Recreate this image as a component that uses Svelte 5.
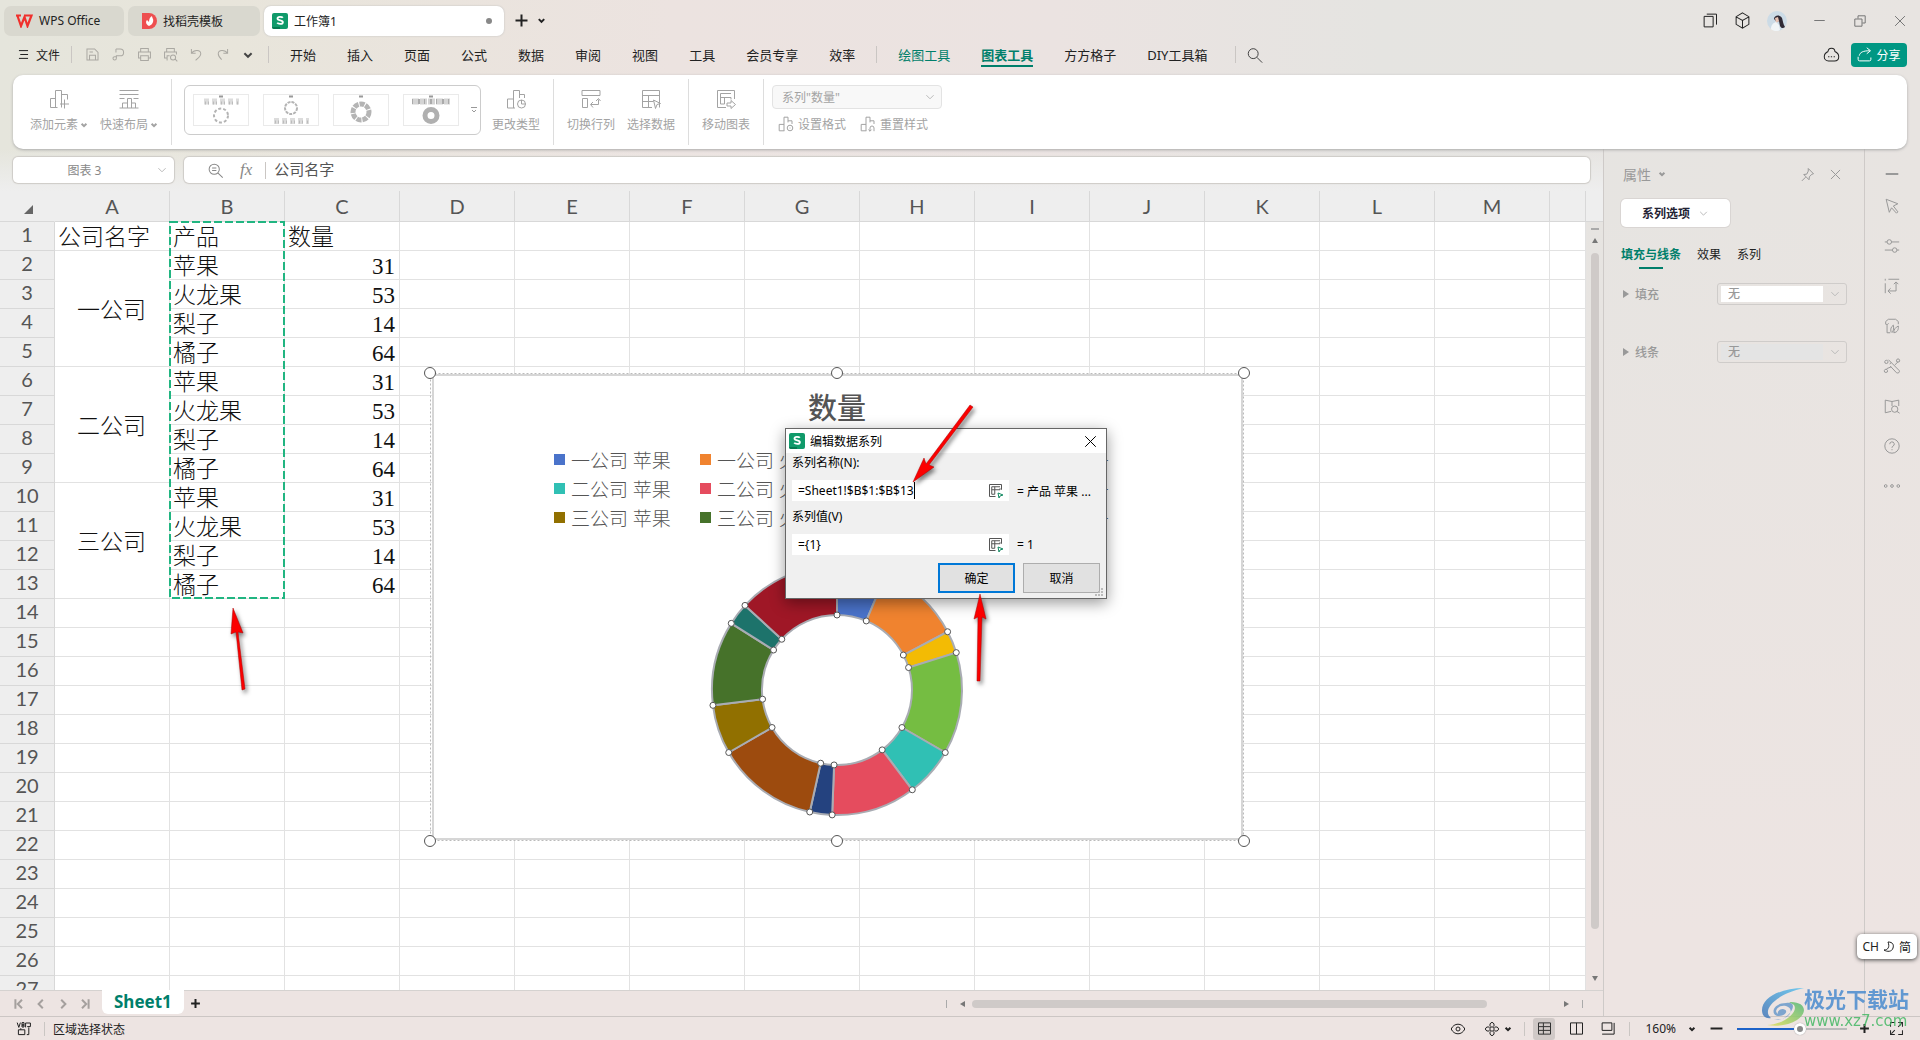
<script lang="ts">
  const icons: Record<string, string> = {
    menu: 'M3 4h14M5 10h12M3 16h14',
    save: 'M3.5 3.5h9l4 4v9h-13zM6.5 16v-5h7v5M6.5 7h4',
    export: 'M7 3.5h5a4 4 0 0 1 0 8H7.5v3a2 2 0 1 1-4 0 2 2 0 0 1 2-2h2M7 3.5v4',
    print: 'M5.5 7V3h9v4M5 14H3V7h14v7h-2M5.5 11.5h9V17h-9z',
    preview: 'M5.5 7V3h9v4M6 14H3V7h14v3M6 17v-5.500h3M16 13.500a3 3 0 1 1-6 0 3 3 0 0 1 6 0M15.500 15.500l2.500 2.500',
    undo: 'M4 3.500v5h5M4 8.500C7 4 15 4 15 9c0 3-3 5-6 8',
    redo: 'M16 3.500v5h-5M16 8.500C13 4 5 4 5 9c0 3 2 5 4 7',
    chevron: 'M4 7l6 6 6-6',
    search: 'M13.500 8.500a5.500 5.500 0 1 1-11 0 5.500 5.500 0 0 1 11 0M12 12.500l6 6',
    plus: 'M10 2v16M2 10h16',
    minus: 'M3 10h14',
    close: 'M3 3l14 14M17 3L3 17',
    restore: 'M3.500 7.500h9v9h-9zM7.500 7V3.500h9v9H13',
    pages: 'M1.500 4.500h12v14h-12zM5 1.500h13v14',
    cube: 'M10 1l7.500 4.500v9L10 19l-7.500-4.500v-9zM3 6l7 4 7-4M10 10v8.500',
    cloud: 'M6 6.500a4 4 0 0 1 8 0c2.500 1.200 4.500 3.500 4.500 6 0 3-2 5-5 5h-7c-3 0-5-2-5-5 0-2.500 2-4.800 4.500-6M6 12.500h1.500M9.200 12.500h1.500M12.500 12.500H14',
    share: 'M1.500 13v3.500a2 2 0 0 0 2 2h13a2 2 0 0 0 2-2V14M3 11.500C4 7 8 5 17 5M13 1l5 4-5 4',
    pin: 'M11 2l7 7-2 .5-3.500 3.500-.5 4-3.500-3.500-3.500-3.500 4-.5L11 5.500zM7.500 13.500L2.500 18.500',
    addElement: 'M8.500 18.500h-7v-9h5m0 9V1.500h6v17M12.500 5.500h6v5M15.500 10.500v9M11 15h9',
    quickLayout: 'M.5 1.500h19M.5 5.500h19M.5 9.500h5M14.500 9.500h5M3.500 19v-5h5M8.500 19V9.500h4V19M12.500 14h4v5M.5 19h19',
    changeType: 'M9 19H1.500v-9h6M7.500 19V1.500h6V9M13.500 5.500h5V9M19.500 15a4 4 0 1 1-8 0 4 4 0 0 1 8 0M15.500 11v4h4',
    switchRow: 'M1 1.500h18v5H1zM1.500 9.500h5v9h-5zM10 15.500h7.500v-5M12 13l-2.500 2.500 2.500 3M15 12l2.500-2.500 2 2.500',
    pickData: 'M1.500 1.500h17v17M1.500 1.500v17H11M1.500 6.500h17M7.500 6.500v12M1.500 12.500h11M18.500 6.500v6M12.500 11l7 3.500-3.500 1-1.500 4z',
    moveChart: 'M18.500 10V1.500h-17v17H10M4.500 15V4.500H15M4.500 8.500H15v2M8.500 8.500V15h-4M11 14h4v-2.500l4.500 4-4.500 4V17h-4z',
    formatSet: 'M8 18.500H1.500v-8h6M7.500 18.500V1.500h5V8M12.500 6h5v4M18.500 15a3.500 3.500 0 1 1-7 0 3.500 3.500 0 0 1 7 0M14.500 15h1',
    formatReset: 'M8 18.500H1.500v-8h6M7.500 18.500V1.500h5V8M12.500 6h5v4M17.500 19v-4a2.500 2.500 0 0 0-5 0v4M10.500 17l2 2 2-2',
    zoomOut: 'M14.500 8.500a6 6 0 1 1-12 0 6 6 0 0 1 12 0M6 7h5M6 10h5M13 13l5.500 5.500',
    cursor: 'M3.500 2.500l13 5-5 2.500 5 6.500-1.500 1.500-5.500-6-2.500 5z',
    sliders: 'M2 5.500h2.500M9.500 5.500H18M9.500 5.500a2.500 2.500 0 1 1-5 0 2.500 2.500 0 0 1 5 0M2 14.500h8.500M15.500 14.500H18M15.500 14.500a2.500 2.500 0 1 1-5 0 2.500 2.500 0 0 1 5 0',
    resize: 'M2.500 7v11M2.500 2v2M6 2.500h12M6 15.500h8.500V6M8.500 12.500L5.500 15.500l3 3M12 8l2.500-2.500L17 8',
    style: 'M3 8V5l3-2.500h8L17 5v3M3 8c2 1 3 0 3-1M4.500 9v8.500H8M9 17c-1-4 0-6 2.500-8 .5 3 .5 6-1.500 8.500M12 17.500c0-4 2-6 5-7.500.5 4-1 7-5 7.500',
    magic: 'M6 3l12 12c1 2-1 3.500-3 2.500L8 10M9 6L7.500 8M13 9l4-4M4 13l5-2M5 15a1.800 1.800 0 1 1-3.500 0 1.800 1.800 0 0 1 3.500 0M18.500 3.500a1.800 1.800 0 1 1-3.500 0 1.800 1.800 0 0 1 3.500 0M5.500 5a1.800 1.800 0 1 1-3.500 0 1.800 1.800 0 0 1 3.500 0',
    book: 'M9 16l-6.500 1.500v-14L10 5l7.500-1.500V10M10 5v5M16.500 13.500a3.500 3.500 0 1 1-7 0 3.500 3.500 0 0 1 7 0M15.500 16l3 2',
    help: 'M18 10a8 8 0 1 1-16 0 8 8 0 0 1 16 0M7.500 8a2.500 2.500 0 1 1 3.500 2.200c-.8.400-1 .8-1 1.800M10 13.500v1.200',
    more: 'M4.500 10a1.500 1.500 0 1 1-3 0 1.500 1.500 0 0 1 3 0M11.500 10a1.500 1.500 0 1 1-3 0 1.500 1.500 0 0 1 3 0M18.500 10a1.500 1.500 0 1 1-3 0 1.500 1.500 0 0 1 3 0',
    first: 'M4 2v16M15 3l-7 7 7 7',
    prev: 'M13 3l-7 7 7 7',
    next: 'M7 3l7 7-7 7',
    last: 'M16 2v16M5 3l7 7-7 7',
    macro: 'M1.500 2l2 6 2-6M7.500 2v5.500h2.500V5H7.500 10V2zM12 8V2.500h6V7h-4M16 8v9h-2.500M3 17v-6h8v6zM6 11v-2',
    eye: 'M1.500 10C5 2 15 2 18.500 10 15 18 5 18 1.500 10M12.500 10a2.500 2.500 0 1 1-5 0 2.500 2.500 0 0 1 5 0',
    target: 'M7.500 6.500v-3l2.500-2 2.500 2v3M13.500 7.500h3l2 2.500-2 2.500h-3M12.500 13.500v3l-2.500 2-2.500-2v-3M6.500 12.500h-3L1.500 10l2-2.500h3M7.500 7.500h5v5h-5z',
    gridView: 'M2 2.500h16v15H2zM2 7.500h16M2 12.500h16M8.500 2.500v15',
    pageView: 'M2 2.500h16v15H2zM10 2.500v15',
    layoutView: 'M1.500 2.500h13v10h-13zM17.500 2.500v15h-16',
    expand: 'M3 8V3h5M12 3h5v5M12 8l4-4M8 12l-4 4M3 12v5h5M17 12v5h-5',
    picker: 'M18 9V2H2v16h8M5 15V5h11M5 9h11V7M9 5v10H5',
  };

  const quick = ['save', 'export', 'print', 'preview', 'undo', 'redo'];
  const tabsMain = ['开始', '插入', '页面', '公式', '数据', '审阅', '视图', '工具', '会员专享', '效率'];
  const tabsTool = ['绘图工具', '图表工具', '方方格子', 'DIY工具箱'];
  const sideTools = ['minus', 'cursor', 'sliders', 'resize', 'style', 'magic', 'book', 'help', 'more'];

  const columns = 'ABCDEFGHIJKLM'.split('');
  const companies = ['一公司', '二公司', '三公司'];
  const products = ['苹果', '火龙果', '梨子', '橘子'];
  const amounts = [31, 53, 14, 64];
  const rows = Array.from({ length: 27 }, (_, i) => i + 1);
  const restColumns = columns.slice(3).concat('N');

  const colors = [
    '#4a73ca', '#f0832f', '#f3bb04', '#75bd42',
    '#30c0b4', '#e54c5e', '#24427f', '#9d4b0e',
    '#917000', '#46722a', '#1d736b', '#9f1726',
  ];

  const center = { x: 407, y: 317 };
  const outer = 125;
  const inner = 75;

  function point(radius: number, turn: number) {
    const angle = turn * Math.PI * 2;
    return {
      x: center.x + radius * Math.sin(angle),
      y: center.y - radius * Math.cos(angle),
    };
  }

  const values = companies.flatMap(() => amounts);
  const total = values.reduce((sum, v) => sum + v, 0);
  const slices = values.map((value, i) => {
    const start = values.slice(0, i).reduce((sum, v) => sum + v, 0) / total;
    const end = start + value / total;
    const a = point(outer, start);
    const b = point(outer, end);
    const c = point(inner, end);
    const d = point(inner, start);
    return {
      color: colors[i],
      path: `M${a.x} ${a.y}A${outer} ${outer} 0 0 1 ${b.x} ${b.y}L${c.x} ${c.y}A${inner} ${inner} 0 0 0 ${d.x} ${d.y}Z`,
      dots: [a, d],
    };
  });

  let seriesName = $state('=Sheet1!$B$1:$B$13');
  let seriesValue = $state('={1}');
  let zoom = $state(58);
</script>

{#snippet icon(name: string, size = 16, weight = 1)}
  <svg class="icon" width={size} height={size} viewBox="0 0 20 20" stroke-width={(weight * 20) / size} aria-hidden="true">
    <path d={icons[name]} />
  </svg>
{/snippet}

{#snippet sheetLogo()}
  <svg width="16" height="16" viewBox="0 0 16 16" aria-hidden="true">
    <rect width="16" height="16" rx="2" fill="#109a6a" />
    <path d="M0 14h8v2H2a2 2 0 0 1-2-2z" fill="#067a50" />
    <path d="M10.800 4.800C10 3.600 5.500 3.200 5.500 5.500c0 2.500 5.400 1.200 5.400 3.700 0 2.300-4.600 2-5.700.6" fill="none" stroke="#fff" stroke-width="1.800" />
  </svg>
{/snippet}

<div class="app">
  <header class="titlebar">
    <button class="tab home">
      <svg width="17" height="14" viewBox="0 0 17 14" aria-hidden="true">
        <path d="M0 1.500h5M1.500 2l3.500 10 3.500-9 3 9L15.500 1.500h-6.500" fill="none" stroke="#f0302c" stroke-width="2.200" />
      </svg>
      WPS Office
    </button>
    <button class="tab template">
      <svg width="15" height="16" viewBox="0 0 15 16" aria-hidden="true">
        <path d="M0 0h7a8 8 0 0 1 0 16H0z" fill="#ee4f50" />
        <path d="M7 13c-4-2-3-5-2-6l2 2c0-3 1-5 3-6 0 2 2 3 1 6-.5 2-2 3-4 4" fill="#fff" />
      </svg>
      找稻壳模板
    </button>
    <button class="tab current">
      {@render sheetLogo()}
      工作簿1
      <span class="dirty"></span>
    </button>
    <button class="bare new" aria-label="新建">{@render icon('plus', 15, 2)}</button>
    <button class="bare" aria-label="标签列表">{@render icon('chevron', 9, 2)}</button>
    <div class="window-tools">
      <button class="bare" aria-label="窗口">{@render icon('pages', 15)}</button>
      <button class="bare" aria-label="应用">{@render icon('cube', 17)}</button>
      <svg width="20" height="20" viewBox="0 0 20 20" aria-hidden="true">
        <circle cx="10" cy="10" r="10" fill="#ccdbe6" />
        <path d="M7 8c0-4 6-5 8-1 1 3 1 6 3 9-2 2-4 1-5-1l-1-5-2 1z" fill="#2f2934" />
        <path d="M8 7l3-1 1 4-3 2z" fill="#e8c3b4" />
        <path d="M4 18c0-4 2-6 5-7l3 3 1 5c-3 2-7 1-9-1z" fill="#f1f5f7" />
      </svg>
      <button class="bare dim" aria-label="最小化">{@render icon('minus', 15)}</button>
      <button class="bare dim" aria-label="还原">{@render icon('restore', 16)}</button>
      <button class="bare dim" aria-label="关闭">{@render icon('close', 14)}</button>
    </div>
  </header>

  <nav class="menubar">
    <button class="bare file">{@render icon('menu', 13, 1)}文件</button>
    <span class="rule"></span>
    <div class="quick">
      {#each quick as name}
        <button class="bare" aria-label={name}>{@render icon(name, 17)}</button>
      {/each}
      <button class="bare dark" aria-label="更多">{@render icon('chevron', 12, 2)}</button>
    </div>
    <span class="rule"></span>
    <div class="menu-tabs">
      {#each tabsMain as tab}
        <button class="bare">{tab}</button>
      {/each}
      <span class="rule inner"></span>
      {#each tabsTool as tab, i}
        <button class="bare" class:context={i < 2} class:active={i === 1}>{tab}</button>
      {/each}
    </div>
    <span class="rule"></span>
    <button class="bare find" aria-label="搜索">{@render icon('search', 18)}</button>
    <div class="menu-right">
      <button class="bare" aria-label="云">{@render icon('cloud', 17, 1)}</button>
      <button class="share">{@render icon('share', 15, 1)}分享</button>
    </div>
  </nav>

  <section class="ribbon">
    <div class="group first">
      <button class="bare tool">{@render icon('addElement', 20)}<span>添加元素{@render icon('chevron', 8, 2)}</span></button>
      <button class="bare tool">{@render icon('quickLayout', 20)}<span>快速布局{@render icon('chevron', 8, 2)}</span></button>
    </div>
    <div class="group gallery-group">
      <div class="gallery">
        {#each [0, 1, 2, 3] as n}
          <button class="thumb" aria-label="样式 {n + 1}">
            <svg width="54" height="30" viewBox="0 0 54 30" fill="none" aria-hidden="true">
              <path d="M25 1.500h4" stroke="#999" stroke-width="2" />
              {#if n === 0}
                <path d="M10 6.500h35" stroke="#dcdcdc" stroke-width="6" stroke-dasharray="5 3" />
                <path d="M11 8h35" stroke="#bcbcbc" stroke-width="3" stroke-dasharray="1 2 1 4" />
                <circle cx="27" cy="20.500" r="7" stroke="#b4b4b4" stroke-width="2" stroke-dasharray="3 2" />
              {:else if n === 1}
                <circle cx="27" cy="13" r="6" stroke="#b4b4b4" stroke-width="2" stroke-dasharray="3 1" />
                <path d="M10 26h35" stroke="#dcdcdc" stroke-width="6" stroke-dasharray="5 3" />
                <path d="M11 27h35" stroke="#bcbcbc" stroke-width="3" stroke-dasharray="1 2 1 4" />
              {:else if n === 2}
                <circle cx="27" cy="17" r="8" stroke="#b4b4b4" stroke-width="5" stroke-dasharray="5 1" />
              {:else}
                <path d="M8 6.500h38" stroke="#d4d4d4" stroke-width="6" stroke-dasharray="7 1" />
                <path d="M8 6.500h38" stroke="#aaa" stroke-width="5" stroke-dasharray="1 5 2 4" />
                <circle cx="27" cy="20.500" r="6" stroke="#b0b0b0" stroke-width="5" />
              {/if}
            </svg>
          </button>
        {/each}
        <button class="bare" aria-label="更多样式">
          <svg width="6" height="6" viewBox="0 0 6 6" stroke="#999" fill="none"><path d="M0 .5h6M1 3l2 2 2-2" /></svg>
        </button>
      </div>
      <button class="bare tool">{@render icon('changeType', 20)}<span>更改类型</span></button>
    </div>
    <div class="group">
      <button class="bare tool">{@render icon('switchRow', 20)}<span>切换行列</span></button>
      <button class="bare tool">{@render icon('pickData', 20)}<span>选择数据</span></button>
    </div>
    <div class="group">
      <button class="bare tool">{@render icon('moveChart', 20)}<span>移动图表</span></button>
    </div>
    <div class="series">
      <div class="select">
        <select aria-label="图表元素"><option>系列"数量"</option></select>
        {@render icon('chevron', 12)}
      </div>
      <div class="series-actions">
        <button class="bare">{@render icon('formatSet', 16)}设置格式</button>
        <button class="bare">{@render icon('formatReset', 16)}重置样式</button>
      </div>
    </div>
  </section>

  <div class="work">
    <main class="main">
      <div class="formula-row">
        <div class="name-box">
          <input aria-label="名称框" value="图表 3" />
          {@render icon('chevron', 12)}
        </div>
        <div class="formula">
          {@render icon('zoomOut', 17)}
          <i>fx</i>
          <span class="rule"></span>
          <input aria-label="编辑栏" value="公司名字" />
        </div>
      </div>

      <div class="sheet">
        <div class="cells">
          <table>
            <colgroup>
              <col class="row-head" />
              {#each columns as _}<col class="col" />{/each}
              <col />
            </colgroup>
            <thead>
              <tr>
                <th class="corner"><svg width="9" height="9" viewBox="0 0 9 9"><path d="M9 0v9H0z" fill="#666" /></svg></th>
                {#each columns as name}<th>{name}</th>{/each}
                <th></th>
              </tr>
            </thead>
            <tbody>
              {#each rows as row}
                {@const k = row - 2}
                <tr>
                  <th>{row}</th>
                  {#if row === 1}
                    <td>公司名字</td><td>产品</td><td>数量</td>
                  {:else if row <= 13}
                    {#if k % 4 === 0}<td rowspan="4" class="merged">{companies[k / 4]}</td>{/if}
                    <td>{products[k % 4]}</td>
                    <td class="num">{amounts[k % 4]}</td>
                  {:else}
                    <td></td><td></td><td></td>
                  {/if}
                  {#each restColumns as _}<td></td>{/each}
                </tr>
              {/each}
            </tbody>
          </table>

          <svg class="marquee" width="116" height="378" viewBox="0 0 116 378" aria-hidden="true">
            <rect x="1" y="1" width="114" height="376" fill="none" stroke="#21b581" stroke-width="2" stroke-dasharray="8 3" />
          </svg>

          <div class="chart">
            <svg class="plot" width="830" height="484" viewBox="-8 -8 830 484" aria-hidden="true">
              <rect x="3" y="2" width="809" height="464" fill="#fff" stroke="#d6d6d6" stroke-width="2" />
              <rect x=".5" y=".5" width="813" height="467" fill="none" stroke="#bbb" stroke-dasharray="2 2" />
              {#each slices as slice}
                <path d={slice.path} fill={slice.color} stroke="#a9acb3" stroke-width="2" />
              {/each}
              {#each slices as slice}
                {#each slice.dots as dot}
                  <circle cx={dot.x} cy={dot.y} r="3" fill="#fff" stroke="#555" />
                {/each}
              {/each}
              {#each [0, 407, 814] as x}
                {#each [0, 468] as y}
                  <circle cx={x} cy={y} r="5.500" fill="#fff" stroke="#555" />
                {/each}
              {/each}
            </svg>
            <h2>数量</h2>
            <ul class="legend">
              {#each companies as company, i}
                {#each products as product, j}
                  <li><span style:background={colors[i * 4 + j]}></span>{company} {product}</li>
                {/each}
              {/each}
            </ul>
          </div>
        </div>
        <div class="vscroll">
          <div class="head"></div>
          <span class="grip"></span>
          <span class="arrow up"></span>
          <div class="thumb-v"></div>
          <span class="arrow down"></span>
        </div>
      </div>

      <div class="sheet-tabs">
        <div class="pager">
          {#each ['first', 'prev', 'next', 'last'] as name}
            <button class="bare" aria-label={name}>{@render icon(name, 12, 2)}</button>
          {/each}
        </div>
        <button class="sheet-tab">Sheet1</button>
        <button class="bare add" aria-label="新建工作表">{@render icon('plus', 11, 2)}</button>
        <div class="hscroll">
          <span class="bar"></span>
          <span class="arrow left"></span>
          <div class="track"><div class="thumb-h"></div></div>
          <span class="arrow right"></span>
          <span class="bar"></span>
        </div>
      </div>
    </main>

    <aside class="panel">
      <div class="panel-head">
        <span>属性</span>{@render icon('chevron', 8, 2)}
        <button class="bare pin" aria-label="固定">{@render icon('pin', 15)}</button>
        <button class="bare" aria-label="关闭面板">{@render icon('close', 13)}</button>
      </div>
      <button class="option">系列选项{@render icon('chevron', 11)}</button>
      <div class="panel-tabs">
        <button class="bare on">填充与线条</button>
        <button class="bare">效果</button>
        <button class="bare">系列</button>
      </div>
      <div class="prop">
        <span class="fold"></span>
        <label for="fill">填充</label>
        <div class="drop">
          <select id="fill"><option>无</option></select>{@render icon('chevron', 12)}
        </div>
      </div>
      <div class="prop">
        <span class="fold"></span>
        <label for="line">线条</label>
        <div class="drop off">
          <select id="line"><option>无</option></select>{@render icon('chevron', 12)}
        </div>
      </div>
    </aside>

    <div class="side">
      {#each sideTools as name, i}
        <button class="bare" aria-label={name}>{@render icon(name, 18, i === 0 ? 2 : 1)}</button>
      {/each}
    </div>
  </div>

  <footer class="status">
    {@render icon('macro', 16)}
    <span class="rule"></span>
    <span class="state">区域选择状态</span>
    <div class="status-right">
      <button class="bare" aria-label="护眼">{@render icon('eye', 16)}</button>
      <button class="bare target" aria-label="阅读">{@render icon('target', 16)}{@render icon('chevron', 8, 2)}</button>
      <span class="rule"></span>
      <button class="bare view on" aria-label="普通视图">{@render icon('gridView', 15)}</button>
      <button class="bare view" aria-label="分页预览">{@render icon('pageView', 15)}</button>
      <button class="bare view" aria-label="页面布局">{@render icon('layoutView', 15)}</button>
      <span class="rule"></span>
      <button class="bare percent">160%{@render icon('chevron', 8, 2)}</button>
      <button class="bare" aria-label="缩小">{@render icon('minus', 17, 2)}</button>
      <input type="range" aria-label="缩放" min="0" max="100" bind:value={zoom} />
      <button class="bare" aria-label="放大">{@render icon('plus', 11, 2)}</button>
      <button class="bare full" aria-label="全屏">{@render icon('expand', 17)}</button>
    </div>
  </footer>

  <form class="dialog" onsubmit={(e) => e.preventDefault()}>
    <div class="dialog-title">
      {@render sheetLogo()}
      <span>编辑数据系列</span>
      <button type="button" class="bare" aria-label="关闭对话框">{@render icon('close', 15)}</button>
    </div>
    <div class="dialog-body">
      <label for="series-name">系列名称(N):</label>
      <div class="field">
        <div class="box">
          <input id="series-name" bind:value={seriesName} />
          <span class="caret"></span>
          <button type="button" class="bare" aria-label="选择区域">
            {@render icon('picker', 15)}
            <svg class="pick" width="7" height="7" viewBox="0 0 7 7"><path d="M1 1l5 2-3 1-1 2z" fill="#fff" stroke="#148a63" /></svg>
          </button>
        </div>
        <span>= 产品 苹果 ...</span>
      </div>
      <label for="series-value">系列值(V)</label>
      <div class="field">
        <div class="box">
          <input id="series-value" bind:value={seriesValue} />
          <button type="button" class="bare" aria-label="选择区域">
            {@render icon('picker', 15)}
            <svg class="pick" width="7" height="7" viewBox="0 0 7 7"><path d="M1 1l5 2-3 1-1 2z" fill="#fff" stroke="#148a63" /></svg>
          </button>
        </div>
        <span>= 1</span>
      </div>
      <div class="actions">
        <button type="submit" class="ok">确定</button>
        <button type="button">取消</button>
      </div>
    </div>
    <svg class="sizer" width="9" height="9" viewBox="0 0 9 9" fill="#bbb"><path d="M6 0h2v2H6zM3 3h2v2H3zM6 3h2v2H6zM0 6h2v2H0zM3 6h2v2H3zM6 6h2v2H6z" /></svg>
  </form>

  <svg class="arrows" width="1000" height="700" viewBox="0 0 1000 700" aria-hidden="true">
    <g fill="#fb0000" stroke="#a00" stroke-width=".5">
      <path d="M233 608l10 25-5-1 7 57-3 1-6-58-5 2z" />
      <path d="M913 482l11-24 2 6 44-59 3 2-44 58 5 2z" />
      <path d="M980 594l6 25-4-2-2 64-3 0 1-64-4 2z" />
    </g>
  </svg>

  <div class="ime">
    <span>CH</span>
    <svg width="12" height="12" viewBox="0 0 12 12" fill="none" stroke="#222"><path d="M5 1c5 0 6 3 5 6-1 4-6 4-9 2 4 0 6-3 4-8z" /></svg>
    <span>简</span>
  </div>

  <div class="mark">
    <svg width="42" height="40" viewBox="0 0 42 40" aria-hidden="true">
      <defs>
        <linearGradient id="wave" x1="0" y1="1" x2="1" y2="0">
          <stop offset="0" stop-color="#4577b8" /><stop offset="1" stop-color="#5cc4f0" />
        </linearGradient>
        <linearGradient id="leaf" x1="0" y1="1" x2="1" y2="0">
          <stop offset="0" stop-color="#e4e05a" /><stop offset="1" stop-color="#50b878" />
        </linearGradient>
      </defs>
      <path d="M42 0C18 0 0 10 0 22c0 7 5 9 9 8C-1 22 14 6 42 0z" fill="url(#wave)" />
      <path d="M24 15c-14 0-16 13-7 13 7 0 10-6 4-7-4 0-6 3-5 5-5-3 1-10 8-8 10 3 3 15-12 13C25 36 40 12 24 15z" fill="#6b9bcb" />
      <path d="M27 14c16-1 20 10 8 18C27 37 16 39 5 37c15 0 32-12 27-20z" fill="url(#leaf)" />
    </svg>
    <div><strong>极光下载站</strong><span>www.xz7.com</span></div>
  </div>
</div>

<style>
  :global(body) {
    margin: 0;
    overflow: hidden;
  }

  .app {
    --teal: #007f6b;
    --gray: #a3a3a3;
    position: relative;
    display: flex;
    flex-direction: column;
    height: 100vh;
    overflow: hidden;
    font: 12px 'Noto Sans', 'Noto Sans CJK SC', sans-serif;
    color: #222;
    background:
      linear-gradient(to bottom, transparent 20%, #ede4e2 90%),
      linear-gradient(to right, #e5e5dc, #e8e5db 12%, #ece3e0 35%, #ebe3e1 55%, #e5e4e1 72%, #e8e4e1);
  }

  button,
  input,
  select {
    font: inherit;
    color: inherit;
  }

  .icon {
    flex: none;
    fill: none;
    stroke: currentColor;
  }

  .bare {
    display: flex;
    align-items: center;
    padding: 0;
    border: 0;
    background: none;
    white-space: nowrap;
  }

  .rule {
    flex: none;
    width: 1px;
    height: 17px;
    background: #cac6c3;
  }

  .titlebar {
    display: flex;
    align-items: center;
    flex: none;
    height: 41px;
    padding-left: 4px;
    box-sizing: border-box;
  }

  .tab {
    display: flex;
    align-items: center;
    gap: 6px;
    height: 30px;
    margin-right: 4px;
    padding: 0 12px;
    border: 0;
    border-radius: 7px;
    background: #d9d8cf;
  }

  .home {
    width: 120px;
  }

  .template {
    width: 132px;
    padding-left: 14px;
  }

  .current {
    width: 240px;
    padding: 0 12px 0 8px;
    background: #fff;
    box-shadow: 0 0 2px #bbb;
  }

  .dirty {
    width: 6px;
    height: 6px;
    margin-left: auto;
    border-radius: 50%;
    background: #888;
  }

  .new {
    margin: 0 8px 0 6px;
  }

  .window-tools {
    display: flex;
    align-items: center;
    gap: 16px;
    margin-left: auto;
    padding-right: 13px;
  }

  .window-tools .dim {
    margin-left: 9px;
    color: #777;
  }

  .menubar {
    display: flex;
    align-items: center;
    flex: none;
    height: 34px;
    box-sizing: border-box;
    padding: 0 13px 7px 17px;
  }

  .file {
    gap: 6px;
    margin-right: 11px;
  }

  .quick {
    display: flex;
    gap: 9px;
    margin: 0 14px 0 12px;
    color: #aaa8a2;
  }

  .quick .dark {
    margin-left: 2px;
    color: #444;
  }

  .menu-tabs {
    display: flex;
    align-items: center;
    gap: 31px;
    margin: 0 28px 0 21px;
    font-size: 13px;
  }

  .menu-tabs .inner {
    margin: 0 -10px;
  }

  .context {
    color: var(--teal);
  }

  .active {
    position: relative;
    font-weight: 700;
  }

  .active::after {
    content: '';
    position: absolute;
    right: 0;
    bottom: -3px;
    left: 0;
    height: 2px;
    background: var(--teal);
  }

  .find {
    margin-left: 10px;
    color: #444;
  }

  .menu-right {
    display: flex;
    align-items: center;
    gap: 11px;
    margin-left: auto;
  }

  .share {
    display: flex;
    align-items: center;
    justify-content: center;
    gap: 4px;
    width: 56px;
    height: 24px;
    padding: 0;
    border: 0;
    border-radius: 4px;
    color: #fff;
    background: #009783;
  }

  .ribbon {
    display: flex;
    flex: none;
    height: 74px;
    margin: 0 13px;
    border-radius: 10px;
    background: #fff;
    box-shadow: 0 1px 3px #aaa;
    color: var(--gray);
    z-index: 1;
  }

  .group {
    display: flex;
    gap: 12px;
    margin: 4px 0;
    padding: 0 13px;
    border-right: 1px solid #ddd;
  }

  .group.first {
    gap: 12px;
    padding: 0 13px 0 17px;
  }

  .gallery-group {
    gap: 11px;
    padding-left: 12px;
  }

  .tool {
    flex-direction: column;
    padding-top: 10px;
    gap: 7px;
    line-height: 17px;
  }

  .tool span {
    display: flex;
    align-items: center;
    gap: 2px;
  }

  .gallery {
    display: flex;
    align-items: center;
    gap: 14px;
    align-self: flex-start;
    height: 48px;
    margin-top: 6px;
    padding: 0 3px 0 8px;
    border: 1px solid #ccc;
    border-radius: 6px;
  }

  .thumb {
    display: flex;
    width: 56px;
    height: 32px;
    padding: 0;
    border: 1px solid #eaeaea;
    background: #fff;
  }

  .gallery .bare {
    margin-left: -2px;
  }

  .series {
    padding: 10px 8px;
  }

  .select {
    display: flex;
    align-items: center;
    width: 168px;
    height: 22px;
    padding: 0;
    border: 1px solid #e3e3e3;
    border-radius: 4px;
    background: #f8f8f8;
  }

  select {
    flex: 1;
    min-width: 0;
    padding: 0 0 0 9px;
    border: 0;
    appearance: none;
    background: none;
    outline: 0;
  }

  .select .icon {
    margin-right: 5px;
    color: #bbb;
  }

  .series-actions {
    display: flex;
    gap: 14px;
    margin-top: 6px;
    padding-left: 6px;
  }

  .series-actions .bare {
    gap: 4px;
  }

  .work {
    display: flex;
    flex: 1;
    min-height: 0;
  }

  .main {
    display: flex;
    flex-direction: column;
    flex: 1;
    min-width: 0;
    background: linear-gradient(to bottom, transparent, #eee 42px, transparent 43px);
  }

  .formula-row {
    display: flex;
    flex: none;
    gap: 10px;
    padding: 8px 13px 8px;
  }

  .name-box,
  .formula {
    display: flex;
    align-items: center;
    height: 26px;
    border-radius: 5px;
    background: #fff;
    box-shadow: 0 0 1px 1px #cecbc7;
    color: #888;
  }

  .name-box {
    width: 161px;
  }

  .name-box input {
    flex: 1;
    min-width: 0;
    padding: 0 8px;
    border: 0;
    background: none;
    text-align: center;
  }

  .name-box .icon {
    margin-right: 6px;
    color: #bbb;
  }

  .formula {
    flex: 1;
    padding-left: 23px;
  }

  .formula i {
    margin: 0 13px 0 16px;
    font: italic 17px 'Liberation Serif', serif;
  }

  .formula input {
    flex: 1;
    padding: 0 8px 4px;
    border: 0;
    background: none;
    font-size: 15px;
    color: #555;
  }

  .sheet {
    display: flex;
    flex: 1;
    min-height: 0;
    overflow: hidden;
  }

  .cells {
    position: relative;
    flex: 1;
    min-width: 0;
    background: #fff;
  }

  table {
    width: 100%;
    border-spacing: 0;
    table-layout: fixed;
  }

  .row-head {
    width: 55px;
  }

  .col {
    width: 115px;
  }

  th,
  td {
    height: 29px;
    padding: 0;
    box-sizing: border-box;
    border-right: 1px solid #e2e2e2;
    border-bottom: 1px solid #e2e2e2;
    white-space: nowrap;
  }

  th {
    padding-bottom: 4px;
    border-color: #d8d8d8;
    background: #eee;
    color: #555;
    font: 20px Lato, sans-serif;
    line-height: 24px;
  }

  thead th {
    height: 31px;
    padding-bottom: 0;
  }

  thead .corner {
    padding-right: 21px;
    border-right-color: transparent;
    text-align: right;
  }

  td {
    padding: 4px 4px 0 3px;
    font-family: 'Liberation Serif', 'Noto Sans CJK SC', serif;
    font-size: 23px;
    font-weight: 300;
    line-height: 24px;
    color: #111;
  }

  .merged {
    text-align: center;
  }

  .num {
    text-align: right;
  }

  .marquee {
    position: absolute;
    top: 30px;
    left: 169px;
  }

  .chart {
    position: absolute;
    top: 182px;
    left: 430px;
    width: 814px;
    font-family: 'Liberation Serif', 'Noto Sans CJK SC', serif;
    color: #555;
  }

  .plot {
    position: absolute;
    top: -8px;
    left: -8px;
  }

  h2 {
    position: relative;
    margin: 16px 0 0;
    font-size: 29px;
    font-weight: 500;
    line-height: 40px;
    text-align: center;
  }

  .legend {
    position: relative;
    display: grid;
    grid-template-columns: repeat(4, 146px);
    grid-auto-rows: 29px;
    margin: 16px 0 0;
    padding: 0 0 0 124px;
    list-style: none;
    font-size: 19px;
    font-weight: 300;
  }

  .legend li {
    display: flex;
    align-items: center;
    white-space: pre;
  }

  .legend span {
    flex: none;
    width: 11px;
    height: 11px;
    margin-right: 6px;
  }

  .vscroll {
    display: flex;
    flex-direction: column;
    align-items: center;
    width: 17px;
  }

  .head {
    align-self: stretch;
    height: 30px;
    border-bottom: 1px solid #d8d8d8;
    background: #eee;
  }

  .grip {
    width: 8px;
    height: 2px;
    margin: 6px 0 8px;
    background: #aaa;
  }

  .arrow {
    border: 3px solid transparent;
  }

  .up {
    border-top: 0;
    border-bottom: 5px solid #777;
    margin-bottom: 10px;
  }

  .down {
    border-top: 5px solid #777;
    border-bottom: 0;
    margin: 47px 0 9px;
  }

  .thumb-v {
    flex: 1;
    width: 8px;
    border-radius: 4px;
    background: #cfcac8;
  }

  .sheet-tabs {
    display: flex;
    align-items: center;
    flex: none;
    height: 26px;
    box-sizing: border-box;
    border-top: 1px solid #d5d2d0;
  }

  .pager {
    display: flex;
    gap: 10px;
    padding: 0 11px 0 13px;
    color: #a5a09e;
  }

  .sheet-tab {
    align-self: flex-start;
    height: 24px;
    margin-top: -1px;
    padding: 0 12px;
    border: 0;
    border-radius: 0 0 6px 6px;
    background: #fff;
    font-size: 17px;
    font-weight: 700;
    line-height: 24px;
    color: var(--teal);
  }

  .add {
    margin-left: 6px;
  }

  .hscroll {
    display: flex;
    align-items: center;
    width: 637px;
    margin-left: auto;
    padding-right: 20px;
  }

  .bar {
    width: 1px;
    height: 8px;
    background: #aaa;
  }

  .left {
    margin-left: 10px;
    border-right: 5px solid #777;
  }

  .right {
    margin-right: 10px;
    border-left: 5px solid #777;
  }

  .track {
    flex: 1;
    padding: 0 7px;
  }

  .thumb-h {
    width: 88%;
    height: 8px;
    border-radius: 4px;
    background: #cfcac8;
  }

  .panel {
    width: 261px;
    box-sizing: border-box;
    border-left: 1px solid #cecac8;
    padding: 0 17px;
    color: #999;
  }

  .panel-head {
    display: flex;
    align-items: center;
    gap: 7px;
    height: 50px;
    padding: 0 5px 0 2px;
    font-size: 14px;
  }

  .pin {
    margin: 0 7px 0 auto;
  }

  .option {
    display: flex;
    align-items: center;
    gap: 8px;
    height: 28px;
    padding: 0 21px;
    border: 0;
    border-radius: 5px;
    background: #fff;
    box-shadow: 0 0 0 1px #d9d5d3;
    font-weight: 700;
    color: #223;
  }

  .option .icon {
    color: #bbb;
  }

  .panel-tabs {
    display: flex;
    gap: 16px;
    margin: 18px 0;
    line-height: 20px;
    color: #222;
  }

  .on {
    position: relative;
    color: var(--teal);
    font-weight: 700;
  }

  .panel-tabs .on::after {
    content: '';
    position: absolute;
    left: 18px;
    bottom: -4px;
    width: 24px;
    height: 2px;
    background: var(--teal);
  }

  .prop {
    display: flex;
    align-items: center;
    height: 22px;
    margin-bottom: 36px;
    font-weight: 500;
  }

  .fold {
    margin: 0 6px 0 2px;
    border: 4px solid transparent;
    border-left: 6px solid #999;
    border-right: 0;
  }

  .drop {
    display: flex;
    align-items: center;
    width: 130px;
    height: 22px;
    box-sizing: border-box;
    margin-left: auto;
    padding-left: 3px;
    border: 1px solid #cfccca;
    border-radius: 3px;
  }

  .drop select {
    height: 16px;
    padding-left: 7px;
    background: #fff;
    line-height: 16px;
  }

  .drop.off select {
    background: #e4e4e4;
  }

  .drop .icon {
    margin: 0 5px 0 6px;
    color: #bbb;
  }

  .side {
    display: flex;
    flex-direction: column;
    align-items: center;
    gap: 22px;
    width: 56px;
    box-sizing: border-box;
    padding: 16px 2px 0 0;
    border-left: 1px solid #cecac8;
    color: #999;
  }

  .side .bare:first-child {
    margin-bottom: -8px;
  }

  .status {
    display: flex;
    align-items: center;
    flex: none;
    height: 24px;
    box-sizing: border-box;
    padding: 0 15px 0 16px;
    border-top: 1px solid #ccc6c4;
  }

  .status .rule {
    height: 14px;
    margin: 0 8px 0 12px;
  }

  .status-right {
    display: flex;
    align-items: center;
    margin-left: auto;
  }

  .target {
    gap: 4px;
    margin-left: 18px;
  }

  .view {
    justify-content: center;
    width: 22px;
    height: 22px;
    margin-right: 10px;
    border-radius: 3px;
  }

  .view.on {
    background: #d0c9c7;
    color: #333;
  }

  .status-right .view + .rule {
    margin: 0 15px 0 0;
  }

  .percent {
    gap: 12px;
    margin-right: 12px;
  }

  input[type='range'] {
    width: 110px;
    height: 12px;
    margin: 0 12px;
    appearance: none;
    background: linear-gradient(#1d62c8, #1d62c8) 0 5px / 60% 2px no-repeat, linear-gradient(#bbb, #bbb) 0 5px / 100% 2px no-repeat;
  }

  input[type='range']::-webkit-slider-thumb {
    appearance: none;
    width: 12px;
    height: 12px;
    border: 3px solid #fff;
    border-radius: 50%;
    background: #888;
    box-shadow: 0 0 1px #888;
  }

  .full {
    margin-left: 18px;
  }

  .dialog {
    position: absolute;
    top: 428px;
    left: 785px;
    width: 322px;
    box-sizing: border-box;
    border: 1px solid #666;
    background: #f0f0f0;
    box-shadow: 0 4px 14px rgba(0, 0, 0, 0.4);
    color: #000;
    z-index: 2;
  }

  .dialog-title {
    display: flex;
    align-items: center;
    gap: 5px;
    height: 24px;
    padding: 0 8px 0 3px;
    background: #fff;
  }

  .dialog-title .bare {
    margin-left: auto;
  }

  .dialog-body {
    padding: 1px 6px 5px;
  }

  .dialog-body label {
    display: block;
    line-height: 18px;
    padding-bottom: 8px;
  }

  .field {
    display: flex;
    align-items: center;
    gap: 8px;
    height: 21px;
    margin-bottom: 7px;
    white-space: nowrap;
  }

  .box {
    display: flex;
    align-items: center;
    width: 217px;
    height: 21px;
    background: #fff;
  }

  .box input {
    min-width: 10px;
    padding: 0 0 0 6px;
    border: 0;
    outline: 0;
    background: none;
    field-sizing: content;
  }

  .caret {
    width: 1px;
    height: 17px;
    background: #000;
  }

  .box .bare {
    position: relative;
    margin: 0 6px 0 auto;
    color: #555;
  }

  .pick {
    position: absolute;
    right: -1px;
    bottom: -1px;
  }

  .actions {
    display: flex;
    justify-content: flex-end;
    gap: 8px;
    padding-top: 1px;
  }

  .actions button {
    width: 77px;
    height: 30px;
    padding: 0;
    border: 1px solid #adadad;
    background: #e1e1e1;
  }

  .actions .ok {
    border: 2px solid #0078d7;
  }

  .sizer {
    position: absolute;
    right: 2px;
    bottom: 1px;
  }

  .arrows {
    position: absolute;
    top: 0;
    left: 0;
    pointer-events: none;
    filter: drop-shadow(2px 3px 2px rgba(0, 0, 0, 0.5));
    z-index: 3;
  }

  .ime {
    position: absolute;
    right: 3px;
    bottom: 81px;
    display: flex;
    align-items: center;
    gap: 4px;
    height: 25px;
    padding: 0 6px;
    border-radius: 5px;
    background: #fff;
    box-shadow: 0 1px 4px #444;
  }

  .mark {
    position: absolute;
    right: 11px;
    bottom: 8px;
    display: flex;
    opacity: 0.85;
    pointer-events: none;
  }

  .mark div {
    display: flex;
    flex-direction: column;
  }

  .mark strong {
    font-size: 21px;
    line-height: 23px;
    color: #4a8bcf;
  }

  .mark span {
    font: 15px 'DejaVu Sans', sans-serif;
    line-height: 21px;
    color: #45b865;
  }
</style>
